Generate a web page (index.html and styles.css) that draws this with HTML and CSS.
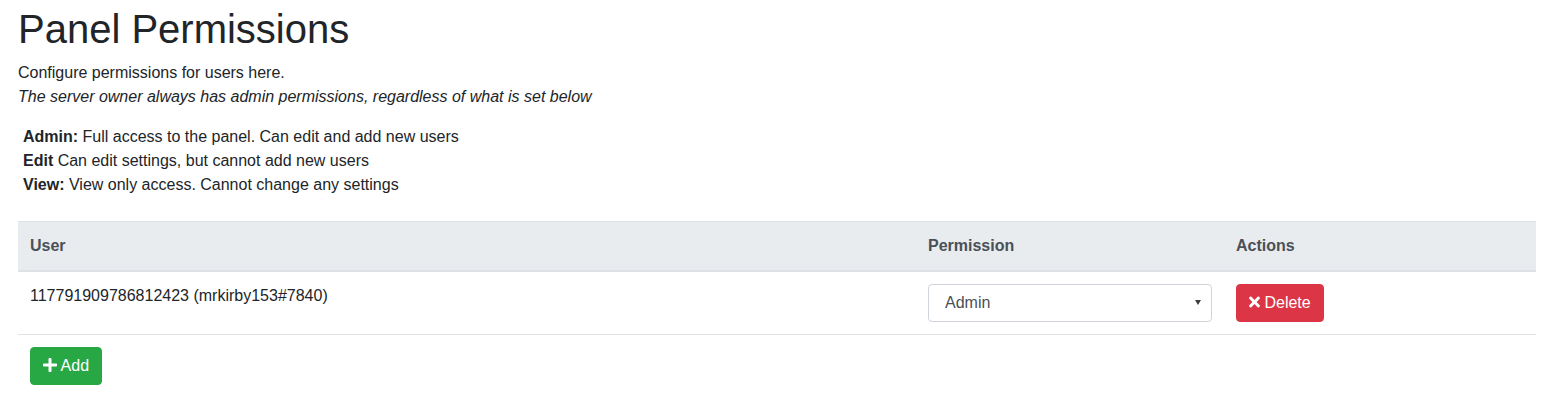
FILE: index.html
```html
<!DOCTYPE html>
<html lang="en">
<head>
<meta charset="utf-8">
<title>Panel Permissions</title>
<link rel="stylesheet" href="styles.css">
</head>
<body>
<div class="page">
  <h1 class="title">Panel Permissions</h1>
  <p class="intro">Configure permissions for users here.<br><em>The server owner always has admin permissions, regardless of what is set below</em></p>
  <ul class="legend">
    <li><strong>Admin:</strong> Full access to the panel. Can edit and add new users</li>
    <li><strong>Edit</strong> Can edit settings, but cannot add new users</li>
    <li><strong>View:</strong> View only access. Cannot change any settings</li>
  </ul>
  <table class="perm-table">
    <colgroup>
      <col class="col-user">
      <col class="col-perm">
      <col class="col-actions">
    </colgroup>
    <thead>
      <tr><th>User</th><th>Permission</th><th>Actions</th></tr>
    </thead>
    <tbody>
      <tr>
        <td>117791909786812423 (mrkirby153#7840)</td>
        <td>
          <div class="select-wrap">
            <select class="perm-select">
              <option selected>Admin</option>
              <option>Edit</option>
              <option>View</option>
            </select>
          </div>
        </td>
        <td>
          <button class="btn btn-danger" type="button"><svg class="icon icon-times" viewBox="0 0 352 512" aria-hidden="true"><path d="M242.72 256l100.07-100.07c12.28-12.28 12.28-32.19 0-44.48l-22.24-22.240c-12.28-12.28-32.19-12.28-44.48 0L176 189.28 75.930 89.210c-12.28-12.28-32.19-12.28-44.48 0L9.21 111.45c-12.28 12.28-12.28 32.19 0 44.48L109.28 256 9.21 356.07c-12.28 12.28-12.28 32.19 0 44.48l22.24 22.24c12.28 12.28 32.2 12.28 44.48 0L176 322.72l100.07 100.07c12.28 12.28 32.2 12.28 44.48 0l22.24-22.24c12.28-12.28 12.28-32.19 0-44.48L242.72 256z"/></svg> Delete</button>
        </td>
      </tr>
    </tbody>
    <tfoot>
      <tr>
        <td colspan="3">
          <button class="btn btn-success" type="button"><svg class="icon icon-plus" viewBox="0 0 448 512" aria-hidden="true"><path d="M416 208H272V64c0-17.67-14.33-32-32-32h-32c-17.67 0-32 14.33-32 32v144H32c-17.67 0-32 14.33-32 32v32c0 17.67 14.33 32 32 32h144v144c0 17.67 14.33 32 32 32h32c17.67 0 32-14.33 32-32V304h144c17.67 0 32-14.33 32-32v-32c0-17.67-14.33-32-32-32z"/></svg> Add</button>
        </td>
      </tr>
    </tfoot>
  </table>
</div>
</body>
</html>
```
FILE: styles.css
```css
html, body {
  margin: 0;
  padding: 0;
  background: #ffffff;
}

body {
  font-family: "Liberation Sans", Arial, Helvetica, sans-serif;
  font-size: 16px;
  line-height: 24px;
  color: #212529;
}

.page {
  padding: 5px 16px 0 18px;
}

.title {
  margin: 0 0 8px 0;
  font-size: 40px;
  line-height: 48px;
  font-weight: 400;
  color: #212529;
}

.intro {
  margin: 0 0 16px 0;
}

.legend {
  list-style: none;
  margin: 0 0 24px 0;
  padding: 0 0 0 5px;
}

.perm-table {
  width: 100%;
  border-collapse: collapse;
  table-layout: fixed;
  margin-bottom: 16px;
}

.col-user { width: 898px; }
.col-perm { width: 308px; }
.col-actions { width: 312px; }

.perm-table th {
  text-align: left;
  vertical-align: bottom;
  padding: 12px;
  font-weight: 700;
  color: #495057;
  background: #e9ecef;
  border-top: 1px solid #dee2e6;
  border-bottom: 2px solid #dee2e6;
}

.perm-table td {
  padding: 12px;
  vertical-align: top;
  border-top: 1px solid #dee2e6;
}

.select-wrap {
  position: relative;
}

.select-wrap::after {
  content: "";
  position: absolute;
  right: 11px;
  top: 16px;
  width: 0;
  height: 0;
  border-left: 3px solid transparent;
  border-right: 3px solid transparent;
  border-top: 5px solid #3d3d3d;
  pointer-events: none;
}

.perm-select {
  -webkit-appearance: none;
  appearance: none;
  display: block;
  width: 100%;
  height: 38px;
  margin: 0;
  padding: 0 28px 0 16px;
  font-family: inherit;
  font-size: 16px;
  line-height: 24px;
  color: #495057;
  background: #ffffff;
  border: 1px solid #ced4da;
  border-radius: 4px;
}

.btn {
  display: inline-block;
  margin: 0;
  padding: 6px 12px;
  font-family: inherit;
  font-size: 16px;
  line-height: 24px;
  font-weight: 400;
  color: #ffffff;
  border: 1px solid transparent;
  border-radius: 4px;
  cursor: pointer;
  white-space: nowrap;
}

.btn-danger {
  background: #dc3545;
  border-color: #dc3545;
}

.btn-success {
  background: #28a745;
  border-color: #28a745;
}

.icon {
  display: inline-block;
  height: 16px;
  vertical-align: -2px;
  fill: currentColor;
  overflow: visible;
}

.icon-times { width: 11px; }
.icon-plus { width: 14px; }
```
